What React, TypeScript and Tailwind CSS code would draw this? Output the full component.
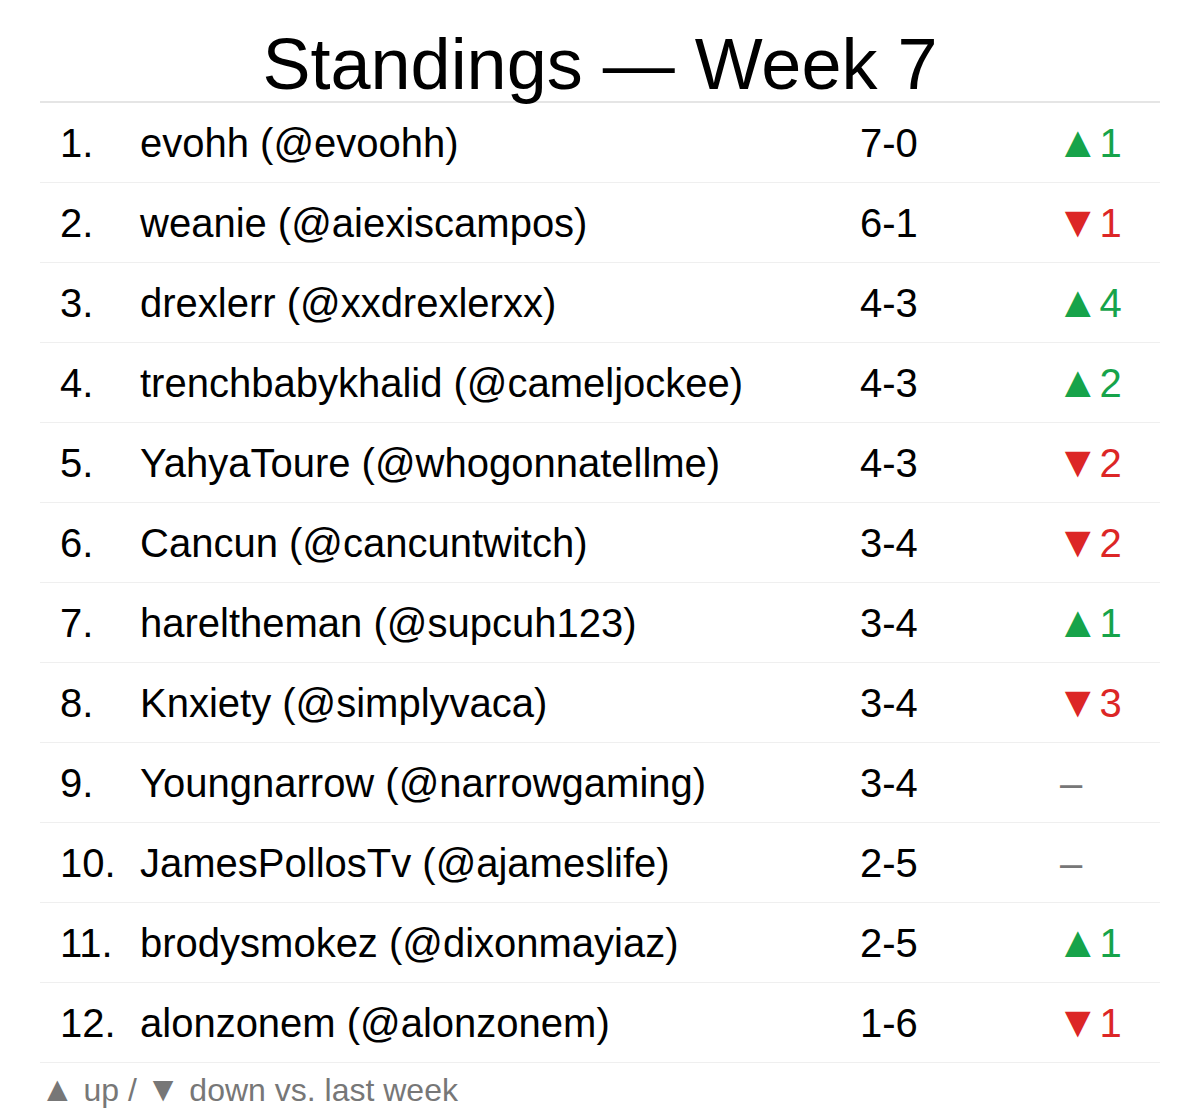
const rows = [
  { rank: 1, name: "evohh (@evoohh)", record: "7-0", dir: "up", n: 1 },
  { rank: 2, name: "weanie (@aiexiscampos)", record: "6-1", dir: "down", n: 1 },
  { rank: 3, name: "drexlerr (@xxdrexlerxx)", record: "4-3", dir: "up", n: 4 },
  { rank: 4, name: "trenchbabykhalid (@cameljockee)", record: "4-3", dir: "up", n: 2 },
  { rank: 5, name: "YahyaToure (@whogonnatellme)", record: "4-3", dir: "down", n: 2 },
  { rank: 6, name: "Cancun (@cancuntwitch)", record: "3-4", dir: "down", n: 2 },
  { rank: 7, name: "hareltheman (@supcuh123)", record: "3-4", dir: "up", n: 1 },
  { rank: 8, name: "Knxiety (@simplyvaca)", record: "3-4", dir: "down", n: 3 },
  { rank: 9, name: "Youngnarrow (@narrowgaming)", record: "3-4", dir: "same", n: 0 },
  { rank: 10, name: "JamesPollosTv (@ajameslife)", record: "2-5", dir: "same", n: 0 },
  { rank: 11, name: "brodysmokez (@dixonmayiaz)", record: "2-5", dir: "up", n: 1 },
  { rank: 12, name: "alonzonem (@alonzonem)", record: "1-6", dir: "down", n: 1 },
];

function Change({ dir, n }: { dir: string; n: number }) {
  if (dir === "up")
    return (
      <span className="text-[#16a34a]">
        <span className="text-[44px] leading-none">▲</span>
        {n}
      </span>
    );
  if (dir === "down")
    return (
      <span className="text-[#dc2626]">
        <span className="text-[44px] leading-none">▼</span>
        {n}
      </span>
    );
  return <span className="ml-1 text-[#777777]">–</span>;
}

export default function App() {
  return (
    <div className="w-[1200px] h-[1120px] bg-white px-10 font-['Liberation_Sans',Arial,sans-serif] text-black">
      <h1 className="h-[103px] pt-[24px] text-center text-[72px] leading-[80px] border-b-2 border-[#e5e5e5]">
        Standings — Week 7
      </h1>
      <ul>
        {rows.map((r) => (
          <li
            key={r.rank}
            className="flex items-center h-[80px] border-b border-[#efefef] text-[40px] pl-5"
          >
            <span className="w-[80px]">{r.rank}.</span>
            <span className="w-[720px]">{r.name}</span>
            <span className="w-[196px]">{r.record}</span>
            <Change dir={r.dir} n={r.n} />
          </li>
        ))}
      </ul>
      <p className="pt-[3px] text-[32px] text-[#777777]">
        <span className="text-[35px] leading-none">▲</span> up /{" "}
        <span className="text-[35px] leading-none">▼</span> down vs. last week
      </p>
    </div>
  );
}
